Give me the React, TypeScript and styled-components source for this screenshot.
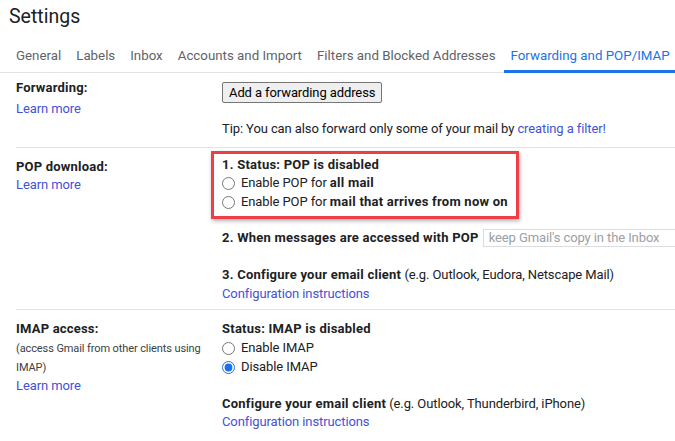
import React from "react";
import styled, { createGlobalStyle } from "styled-components";

const GlobalStyle = createGlobalStyle`
  html, body {
    margin: 0;
    padding: 0;
    background: #ffffff;
    overflow: hidden;
  }
  body {
    font-family: Roboto, "Liberation Sans", Arial, sans-serif;
    color: #202124;
    font-size: 13px;
    letter-spacing: -0.1px;
  }
`;

// page wrapper
const Page = styled.div`
  width: 675px;
  height: 441px;
  overflow: hidden;
`;

const Title = styled.h1`
  margin: 0;
  padding: 3px 0 0 9px;
  height: 33px;
  font-size: 19.5px;
  font-weight: 400;
  line-height: 28px;
  letter-spacing: 0;
  color: #202124;
`;

const TabBar = styled.div`
  display: flex;
  gap: 1px;
  padding-left: 9px;
  border-bottom: 1px solid #e3e3e3;
  white-space: nowrap;
`;

const Tab = styled.div<{ $active?: boolean }>`
  padding: 5px 7px 0 7px;
  height: 29px;
  line-height: 29px;
  font-size: 13.3px;
  letter-spacing: 0;
  color: ${(p) => (p.$active ? "#1a73e8" : "#5f6368")};
  border-bottom: 3px solid ${(p) => (p.$active ? "#1a73e8" : "transparent")};
  margin-bottom: -1px;
`;

const Section = styled.div<{ $pad: string; $border?: boolean }>`
  display: grid;
  grid-template-columns: 206px 1fr;
  margin-left: 16px;
  padding: ${(p) => p.$pad};
  border-top: ${(p) => (p.$border ? "1px solid #e3e3e3" : "none")};
`;

const LabelCol = styled.div<{ $lh?: number }>`
  display: flex;
  flex-direction: column;
  line-height: ${(p) => p.$lh ?? 18.5}px;
`;

const Label = styled.div`
  font-weight: 700;
  font-size: 13px;
  letter-spacing: 0.2px;
`;

const Note = styled.div`
  font-size: 11px;
  line-height: 19px;
  color: #3c4043;
`;

const Link = styled.a`
  color: #4352d6;
  text-decoration: none;
  cursor: pointer;
`;

const ValueCol = styled.div`
  display: flex;
  flex-direction: column;
  align-items: flex-start;
  line-height: 18.5px;
  white-space: nowrap;
`;

const Button = styled.button`
  margin-top: 5px;
  font-family: Roboto, "Liberation Sans", Arial, sans-serif;
  font-size: 13px;
  letter-spacing: -0.1px;
  color: #000;
  background: #efefef;
  border: 1px solid #767676;
  border-radius: 2px;
  height: 21px;
  padding: 0 6px;
  line-height: 19px;
`;

const Tip = styled.div`
  margin-top: 17px;
`;

// red annotation box around the POP status
const Highlight = styled.div`
  margin: -7px 0 0 -11px;
  padding: 2px 8px 4px 8px;
  border: 3px solid #ee3f47;
  box-shadow: 1px 2px 4px rgba(0, 0, 0, 0.3);
`;

const Strong = styled.span`
  font-weight: 700;
  letter-spacing: 0.24px;
`;

const RadioRow = styled.label`
  display: flex;
  align-items: center;
  height: 19px;
`;

const Radio = styled.input.attrs({ type: "radio" })`
  width: 13px;
  height: 13px;
  margin: 0 6px 0 0;
  accent-color: #1a73e8;
`;

const Line = styled.div<{ $gap?: number }>`
  display: flex;
  align-items: center;
  margin-top: ${(p) => p.$gap ?? 0}px;
`;

const FakeSelect = styled.div`
  margin-left: 4px;
  width: 200px;
  height: 18px;
  box-sizing: border-box;
  border: 1px solid #dadce0;
  padding-left: 5px;
  line-height: 16px;
  color: #9aa0a6;
  font-size: 13px;
`;

export default function App() {
  const tabs = [
    "General",
    "Labels",
    "Inbox",
    "Accounts and Import",
    "Filters and Blocked Addresses",
    "Forwarding and POP/IMAP",
  ];

  return (
    <Page>
      <GlobalStyle />
      <Title>Settings</Title>
      <TabBar>
        {tabs.map((t, i) => (
          <Tab key={t} $active={i === tabs.length - 1}>
            {t}
          </Tab>
        ))}
      </TabBar>

      {/* Forwarding */}
      <Section $pad="4px 0 8px 0">
        <LabelCol $lh={21}>
          <Label>Forwarding:</Label>
          <Link>Learn more</Link>
        </LabelCol>
        <ValueCol>
          <Button>Add a forwarding address</Button>
          <Tip>
            Tip: You can also forward only some of your mail by{" "}
            <Link>creating a filter!</Link>
          </Tip>
        </ValueCol>
      </Section>

      {/* POP */}
      <Section $pad="10px 0 6px 0" $border>
        <LabelCol>
          <Label>POP download:</Label>
          <Link>Learn more</Link>
        </LabelCol>
        <ValueCol>
          <Highlight>
            <Strong>1. Status: POP is disabled</Strong>
            <RadioRow>
              <Radio name="pop" />
              Enable POP for&nbsp;<Strong>all mail</Strong>
            </RadioRow>
            <RadioRow>
              <Radio name="pop" />
              Enable POP for&nbsp;<Strong>mail that arrives from now on</Strong>
            </RadioRow>
          </Highlight>
          <Line $gap={10}>
            <Strong>2. When messages are accessed with POP</Strong>
            <FakeSelect>keep Gmail's copy in the Inbox</FakeSelect>
          </Line>
          <Line $gap={18.5}>
            <Strong>3. Configure your email client</Strong>&nbsp;(e.g. Outlook,
            Eudora, Netscape Mail)
          </Line>
          <Link>Configuration instructions</Link>
        </ValueCol>
      </Section>

      {/* IMAP */}
      <Section $pad="10px 0 10px 0" $border>
        <LabelCol>
          <Label>IMAP access:</Label>
          <Note>
            (access Gmail from other clients using
            <br />
            IMAP)
          </Note>
          <Link>Learn more</Link>
        </LabelCol>
        <ValueCol>
          <Strong>Status: IMAP is disabled</Strong>
          <RadioRow>
            <Radio name="imap" />
            Enable IMAP
          </RadioRow>
          <RadioRow>
            <Radio name="imap" defaultChecked />
            Disable IMAP
          </RadioRow>
          <Line $gap={18}>
            <Strong>Configure your email client</Strong>&nbsp;(e.g. Outlook,
            Thunderbird, iPhone)
          </Line>
          <Link>Configuration instructions</Link>
        </ValueCol>
      </Section>
    </Page>
  );
}
